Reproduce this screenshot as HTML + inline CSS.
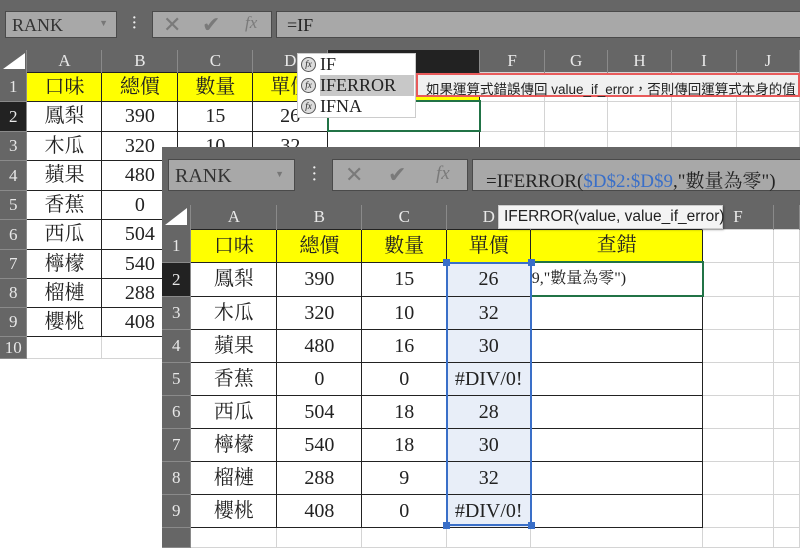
<!DOCTYPE html>
<html><head><meta charset="utf-8"><style>
*{margin:0;padding:0;box-sizing:border-box}
body{width:800px;height:533px;overflow:hidden;background:#fff;position:relative;font-family:"Liberation Serif","Noto Serif CJK TC",serif}
.a{position:absolute}
.bg{background:#666}
.box{position:absolute;background:#a8a8a8;border:1px solid #4a4a4a}
table{position:absolute;border-collapse:collapse;table-layout:fixed}
td{text-align:center;font-size:20px;color:#222;overflow:hidden;white-space:nowrap;padding:0;line-height:1}
td.h{background:#666;color:#e8e8e8;font-size:17px;border-right:1px solid #8a8a8a;border-bottom:1px solid #8a8a8a}
tr.ch td{background:#666;color:#e8e8e8;font-size:17px;border-right:1px solid #8a8a8a}
td.y{background:#ff0;border:1px solid #222}
td.w{background:#fff;border:1px solid #222}
td.g{background:#fff;border:1px solid #d4d4d4}
.ic{color:#7a7a7a;font-size:22px;position:absolute}
</style></head><body>

<!-- BACK WINDOW -->
<div class="a bg" style="left:0;top:0;width:800px;height:50px"></div>
<div class="box" style="left:5px;top:11px;width:112px;height:27px;font-size:18px;padding:3px 0 0 6px;color:#333">RANK<span style="position:absolute;right:8px;top:6px;font-size:9px;color:#777">▼</span></div>
<div class="a" style="left:132px;top:16px;color:#eee;font-size:14px;line-height:5px;font-weight:bold">·<br>·<br>·</div>
<div class="box" style="left:152px;top:11px;width:120px;height:27px"><span class="ic" style="left:10px;top:0">✕</span><span class="ic" style="left:49px;top:0">✔</span><span class="ic" style="left:92px;top:1px;font-style:italic;font-size:17px">fx</span></div>
<div class="box" style="left:276px;top:11px;width:530px;height:27px;font-size:18px;padding:3px 0 0 10px;color:#222">=IF</div>

<table style="left:0;top:50px">
<colgroup><col width="27"><col width="75"><col width="76"><col width="75"><col width="75"><col width="152"><col width="65"><col width="63"><col width="64"><col width="65"><col width="63"></colgroup>
<tr class="ch" style="height:22px"><td></td><td>A</td><td>B</td><td>C</td><td>D</td><td style="background:#222"></td><td>F</td><td>G</td><td>H</td><td>I</td><td>J</td></tr>
<tr style="height:29px"><td class="h">1</td><td class="y">口味</td><td class="y">總價</td><td class="y">數量</td><td class="y">單價</td><td class="y"></td><td class="g"></td><td class="g"></td><td class="g"></td><td class="g"></td><td class="g"></td></tr>
<tr style="height:30px"><td class="h" style="background:#222">2</td><td class="w">鳳梨</td><td class="w">390</td><td class="w">15</td><td class="w">26</td><td class="w" style="border:2px solid #217346;text-align:left;font-size:15px;vertical-align:top">&nbsp;=IF</td><td class="g"></td><td class="g"></td><td class="g"></td><td class="g"></td><td class="g"></td></tr>
<tr style="height:29px"><td class="h">3</td><td class="w">木瓜</td><td class="w">320</td><td class="w">10</td><td class="w">32</td><td class="w"></td><td class="g"></td><td class="g"></td><td class="g"></td><td class="g"></td><td class="g"></td></tr>
<tr style="height:30px"><td class="h">4</td><td class="w">蘋果</td><td class="w">480</td><td class="w"></td></tr>
<tr style="height:29px"><td class="h">5</td><td class="w">香蕉</td><td class="w">0</td><td class="w"></td></tr>
<tr style="height:30px"><td class="h">6</td><td class="w">西瓜</td><td class="w">504</td><td class="w"></td></tr>
<tr style="height:29px"><td class="h">7</td><td class="w">檸檬</td><td class="w">540</td><td class="w"></td></tr>
<tr style="height:29px"><td class="h">8</td><td class="w">榴槤</td><td class="w">288</td><td class="w"></td></tr>
<tr style="height:29px"><td class="h">9</td><td class="w">櫻桃</td><td class="w">408</td><td class="w"></td></tr>
<tr style="height:22px"><td class="h">10</td><td class="g" style="border-top:1px solid #222"></td><td class="g" style="border-top:1px solid #222"></td></tr>
</table>
<div class="a" style="left:0;top:50px;width:0;height:0;border-left:22px solid transparent;border-bottom:16px solid #fff;margin:3px"></div>

<!-- autocomplete -->
<div class="a" style="left:297px;top:53px;width:119px;height:65px;background:#fff;border:1px solid #ccc;font-size:18px;color:#222">
<div style="height:21px;padding-left:22px;position:relative">IF<span class="a" style="left:3px;top:3px;width:15px;height:15px;border:1px solid #555;border-radius:50%;background:#ddd;font-size:9px;font-style:italic;text-align:center;line-height:13px">fx</span></div>
<div style="height:21px;padding-left:22px;position:relative"><span style="background:#c8c8c8;display:inline-block;width:94px;height:21px">IFERROR</span><span class="a" style="left:3px;top:3px;width:15px;height:15px;border:1px solid #555;border-radius:50%;background:#ddd;font-size:9px;font-style:italic;text-align:center;line-height:13px">fx</span></div>
<div style="height:21px;padding-left:22px;position:relative">IFNA<span class="a" style="left:3px;top:3px;width:15px;height:15px;border:1px solid #555;border-radius:50%;background:#ddd;font-size:9px;font-style:italic;text-align:center;line-height:13px">fx</span></div>
</div>
<div class="a" style="left:416px;top:73px;width:384px;height:24px;background:#f0f0f0;border:2px solid #e85a5a;font-family:'Liberation Sans','Noto Sans CJK TC',sans-serif;font-size:13.5px;color:#222;padding:3px 0 0 8px;white-space:nowrap">如果運算式錯誤傳回 value_if_error，否則傳回運算式本身的值</div>

<!-- FRONT WINDOW -->
<div class="a bg" style="left:162px;top:147px;width:638px;height:58px"></div>
<div class="box" style="left:168px;top:159px;width:127px;height:32px;font-size:20px;padding:5px 0 0 6px;color:#333">RANK<span style="position:absolute;right:10px;top:9px;font-size:9px;color:#777">▼</span></div>
<div class="a" style="left:312px;top:166px;color:#eee;font-size:14px;line-height:6px;font-weight:bold">·<br>·<br>·</div>
<div class="box" style="left:332px;top:159px;width:136px;height:32px"><span class="ic" style="left:12px;top:2px">✕</span><span class="ic" style="left:55px;top:2px">✔</span><span class="ic" style="left:103px;top:3px;font-style:italic;font-size:19px">fx</span></div>
<div class="box" style="left:472px;top:159px;width:340px;height:32px;font-size:19px;padding:6px 0 0 13px;color:#222;white-space:nowrap">=IFERROR(<span style="color:#3a6fc8">$D$2:$D$9</span>,"數量為零")</div>

<table style="left:162px;top:205px">
<colgroup><col width="29"><col width="86"><col width="85"><col width="85"><col width="84"><col width="172"><col width="71"><col width="26"></colgroup>
<tr class="ch" style="height:24px"><td></td><td>A</td><td>B</td><td>C</td><td>D</td><td style="background:#222"></td><td>F</td><td></td></tr>
<tr style="height:33px"><td class="h">1</td><td class="y">口味</td><td class="y">總價</td><td class="y">數量</td><td class="y">單價</td><td class="y">查錯</td><td class="g"></td><td class="g"></td></tr>
<tr style="height:34px"><td class="h" style="background:#222">2</td><td class="w">鳳梨</td><td class="w">390</td><td class="w">15</td><td class="w" style="background:#e8eef8">26</td><td class="w" style="border:2px solid #217346;text-align:left;font-size:16px">9,"數量為零")</td><td class="g"></td><td class="g"></td></tr>
<tr style="height:33px"><td class="h">3</td><td class="w">木瓜</td><td class="w">320</td><td class="w">10</td><td class="w" style="background:#e8eef8">32</td><td class="w"></td><td class="g"></td><td class="g"></td></tr>
<tr style="height:33px"><td class="h">4</td><td class="w">蘋果</td><td class="w">480</td><td class="w">16</td><td class="w" style="background:#e8eef8">30</td><td class="w"></td><td class="g"></td><td class="g"></td></tr>
<tr style="height:33px"><td class="h">5</td><td class="w">香蕉</td><td class="w">0</td><td class="w">0</td><td class="w" style="background:#e8eef8">#DIV/0!</td><td class="w"></td><td class="g"></td><td class="g"></td></tr>
<tr style="height:33px"><td class="h">6</td><td class="w">西瓜</td><td class="w">504</td><td class="w">18</td><td class="w" style="background:#e8eef8">28</td><td class="w"></td><td class="g"></td><td class="g"></td></tr>
<tr style="height:33px"><td class="h">7</td><td class="w">檸檬</td><td class="w">540</td><td class="w">18</td><td class="w" style="background:#e8eef8">30</td><td class="w"></td><td class="g"></td><td class="g"></td></tr>
<tr style="height:33px"><td class="h">8</td><td class="w">榴槤</td><td class="w">288</td><td class="w">9</td><td class="w" style="background:#e8eef8">32</td><td class="w"></td><td class="g"></td><td class="g"></td></tr>
<tr style="height:33px"><td class="h">9</td><td class="w">櫻桃</td><td class="w">408</td><td class="w">0</td><td class="w" style="background:#e8eef8">#DIV/0!</td><td class="w"></td><td class="g"></td><td class="g"></td></tr>
<tr style="height:20px"><td class="h"></td><td class="g"></td><td class="g"></td><td class="g"></td><td class="g"></td><td class="g"></td><td class="g"></td><td class="g"></td></tr>
</table>
<div class="a" style="left:165px;top:208px;width:0;height:0;border-left:22px solid transparent;border-bottom:17px solid #fff"></div>
<!-- D selection -->
<div class="a" style="left:446px;top:262px;width:86px;height:264px;border:2px solid #3a6fc8"></div>
<div class="a" style="left:443px;top:259px;width:7px;height:7px;background:#3a6fc8"></div>
<div class="a" style="left:528px;top:259px;width:7px;height:7px;background:#3a6fc8"></div>
<div class="a" style="left:443px;top:522px;width:7px;height:7px;background:#3a6fc8"></div>
<div class="a" style="left:528px;top:522px;width:7px;height:7px;background:#3a6fc8"></div>
<!-- tooltip -->
<div class="a" style="left:498px;top:205px;width:225px;height:24px;background:#f4f4f4;border:1px solid #ccc;font-family:'Liberation Sans',sans-serif;font-size:15.5px;color:#222;padding:2px 0 0 5px;white-space:nowrap;box-shadow:1px 1px 2px rgba(0,0,0,.3)">IFERROR(value, value_if_error)</div>
</body></html>
